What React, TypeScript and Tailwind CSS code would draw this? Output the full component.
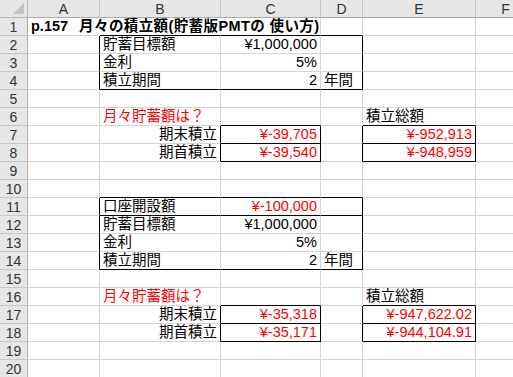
import React from "react";

type Cell = {
  t?: string;
  a?: "l" | "r";
  red?: boolean;
  rb?: boolean; // black right border
  bb?: boolean; // black bottom border
  nr?: boolean; // no right gridline
};

const COLS = ["A", "B", "C", "D", "E", "F"];

const cells: Record<string, Cell> = {
  B1: { bb: true, nr: true },
  C1: { bb: true },
  D1: { bb: true },
  A2: { rb: true },
  A3: { rb: true },
  A4: { rb: true },
  B2: { t: "貯蓄目標額" },
  C2: { t: "¥1,000,000", a: "r" },
  D2: { rb: true },
  B3: { t: "金利" },
  C3: { t: "5%", a: "r" },
  D3: { rb: true },
  B4: { t: "積立期間", bb: true },
  C4: { t: "2", a: "r", bb: true },
  D4: { t: "年間", rb: true, bb: true },
  B6: { t: "月々貯蓄額は？", red: true },
  C6: { bb: true },
  E6: { t: "積立総額", bb: true },
  B7: { t: "期末積立", a: "r", rb: true },
  C7: { t: "¥-39,705", a: "r", red: true, rb: true, bb: true },
  D7: { rb: true },
  E7: { t: "¥-952,913", a: "r", red: true, rb: true, bb: true },
  B8: { t: "期首積立", a: "r", rb: true },
  C8: { t: "¥-39,540", a: "r", red: true, rb: true, bb: true },
  D8: { rb: true },
  E8: { t: "¥-948,959", a: "r", red: true, rb: true, bb: true },
  B10: { bb: true },
  C10: { bb: true },
  D10: { bb: true },
  A11: { rb: true },
  A12: { rb: true },
  A13: { rb: true },
  A14: { rb: true },
  B11: { t: "口座開設額", bb: true },
  C11: { t: "¥-100,000", a: "r", red: true, bb: true },
  D11: { rb: true, bb: true },
  B12: { t: "貯蓄目標額" },
  C12: { t: "¥1,000,000", a: "r" },
  D12: { rb: true },
  B13: { t: "金利" },
  C13: { t: "5%", a: "r" },
  D13: { rb: true },
  B14: { t: "積立期間", bb: true },
  C14: { t: "2", a: "r", bb: true },
  D14: { t: "年間", rb: true, bb: true },
  B16: { t: "月々貯蓄額は？", red: true },
  C16: { bb: true },
  E16: { t: "積立総額", bb: true },
  B17: { t: "期末積立", a: "r", rb: true },
  C17: { t: "¥-35,318", a: "r", red: true, rb: true, bb: true },
  D17: { rb: true },
  E17: { t: "¥-947,622.02", a: "r", red: true, rb: true, bb: true },
  B18: { t: "期首積立", a: "r", rb: true },
  C18: { t: "¥-35,171", a: "r", red: true, rb: true, bb: true },
  D18: { rb: true },
  E18: { t: "¥-944,104.91", a: "r", red: true, rb: true, bb: true },
};

const font = {
  fontFamily: '"Liberation Sans", "Noto Sans CJK JP", sans-serif',
};

function DataCell({ id }: { id: string }) {
  const c = cells[id] || {};
  const rCls = c.rb
    ? "border-r border-r-black"
    : c.nr
    ? "border-r border-r-transparent"
    : "border-r border-r-[#d4d4d4]";
  const bCls = c.bb ? "border-b border-b-black" : "border-b border-b-[#d4d4d4]";
  const align = c.a === "r" ? "justify-end" : "justify-start";
  const color = c.red ? "text-[#ff0000]" : "text-black";
  return (
    <div
      className={`relative flex items-end overflow-visible whitespace-nowrap px-[3px] pb-[1px] text-[14.5px] leading-[16px] ${rCls} ${bCls} ${align} ${color}`}
    >
      {c.t ? <span className="relative z-10">{c.t}</span> : null}
    </div>
  );
}

function TitleCell() {
  return (
    <div className="relative flex items-end overflow-visible whitespace-nowrap border-r border-b border-r-transparent border-b-[#d4d4d4] px-[3px] pb-[1px] text-[14.5px] font-bold leading-[16px] text-black">
      <span className="relative z-10 flex">
        <span className="mr-[11px]">p.157</span>
        <span className="tracking-[0.4px]">月々の積立額(貯蓄版PMTの 使い方)</span>
      </span>
    </div>
  );
}

export default function App() {
  const rows = Array.from({ length: 20 }, (_, i) => i + 1);
  return (
    <div className="w-[513px] h-[377px] overflow-hidden bg-white" style={font}>
      <div className="grid w-[536px] grid-cols-[28px_72px_121px_100px_42px_113px_60px] grid-rows-[18px_repeat(20,18px)]">
        <div className="relative border-r border-b border-[#b5b5b5] bg-[#e6e6e6]">
          <svg className="absolute right-[3px] bottom-[3px]" width="11" height="11" viewBox="0 0 11 11">
            <polygon points="11,0 11,11 0,11" fill="#c3c3c3" />
          </svg>
        </div>
        {COLS.map((col) => (
          <div
            key={col}
            className="flex items-center justify-center border-r border-b border-r-[#c6c6c6] border-b-[#ababab] bg-[#e6e6e6] text-[14px] leading-[16px] text-[#333]"
          >
            {col}
          </div>
        ))}
        {rows.map((r) => (
          <React.Fragment key={r}>
            <div className="flex items-center justify-center border-r border-b border-r-[#ababab] border-b-[#c6c6c6] bg-[#e6e6e6] text-[14px] leading-[16px] text-[#333]">
              {r}
            </div>
            {COLS.map((col) =>
              r === 1 && col === "A" ? (
                <TitleCell key={col + r} />
              ) : (
                <DataCell key={col + r} id={col + r} />
              )
            )}
          </React.Fragment>
        ))}
      </div>
    </div>
  );
}
